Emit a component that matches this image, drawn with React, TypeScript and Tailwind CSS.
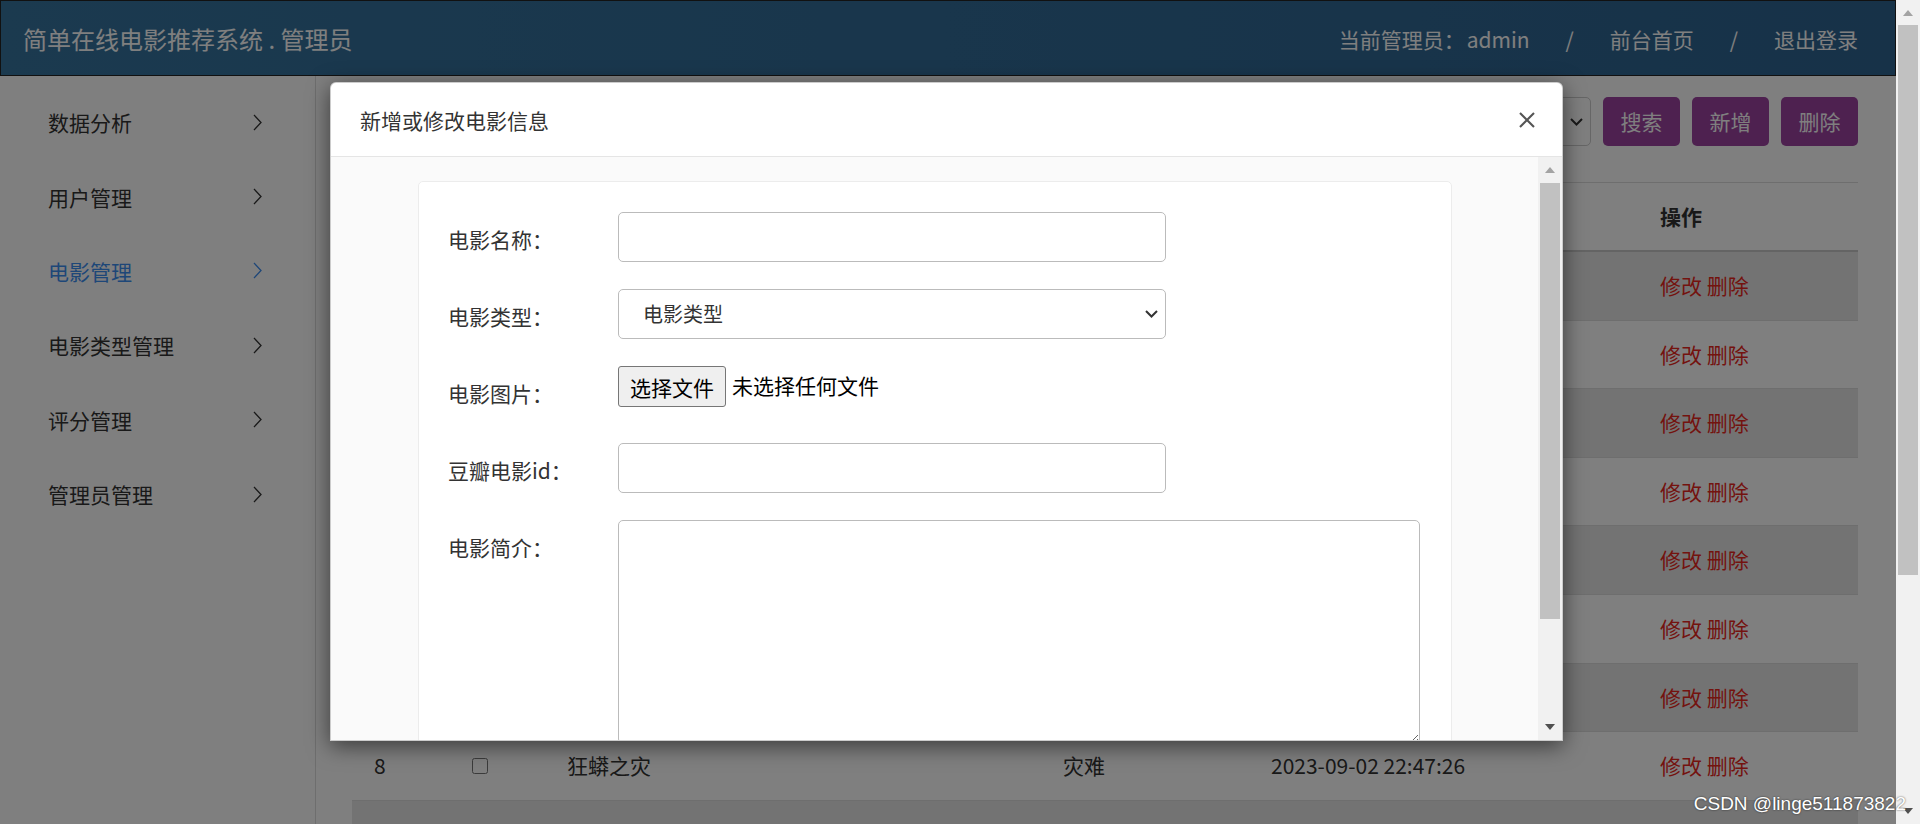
import React from 'react'

const MENU = ['数据分析', '用户管理', '电影管理', '电影类型管理', '评分管理', '管理员管理']

const ROWS = [
  { id: 1, name: '肖申克的救赎', type: '剧情', time: '2023-09-02 22:40:11' },
  { id: 2, name: '霸王别姬', type: '剧情', time: '2023-09-02 22:41:05' },
  { id: 3, name: '阿甘正传', type: '剧情', time: '2023-09-02 22:42:18' },
  { id: 4, name: '泰坦尼克号', type: '爱情', time: '2023-09-02 22:43:02' },
  { id: 5, name: '千与千寻', type: '动画', time: '2023-09-02 22:44:37' },
  { id: 6, name: '盗梦空间', type: '科幻', time: '2023-09-02 22:45:50' },
  { id: 7, name: '星际穿越', type: '科幻', time: '2023-09-02 22:46:41' },
  { id: 8, name: '狂蟒之灾', type: '灾难', time: '2023-09-02 22:47:26' },
]

function Chevron() {
  return (
    <svg width="9" height="17" viewBox="0 0 9 17" fill="none">
      <polyline points="1,1 8,8.5 1,16" stroke="currentColor" strokeWidth="1.3" />
    </svg>
  )
}

function SelectArrow() {
  return (
    <svg width="13" height="8" viewBox="0 0 13 8" fill="none">
      <polyline points="1,1 6.5,6.5 12,1" stroke="#333" strokeWidth="2" />
    </svg>
  )
}

function Arrow({ up, color }: { up?: boolean; color: string }) {
  return (
    <svg width="10" height="6" viewBox="0 0 10 6">
      <polygon points={up ? '0,6 5,0 10,6' : '0,0 5,6 10,0'} fill={color} />
    </svg>
  )
}

function FormRow({ label, children }: { label: string; children: React.ReactNode }) {
  return (
    <div className="flex items-start">
      <label className="w-[170px] shrink-0 pt-[13px] text-[21px] leading-[28px] text-[#333]">{label}</label>
      {children}
    </div>
  )
}

export default function App() {
  return (
    <div className="relative flex h-[824px] w-[1920px] overflow-hidden bg-white font-['Noto_Sans_CJK_SC',sans-serif]">
      {/* page */}
      <div className="relative flex min-w-0 flex-1 flex-col">
        <header className="flex h-[76px] shrink-0 items-center justify-between border border-[#222] bg-gradient-to-r from-[#36749f] to-[#2e6491] pl-[22px] pr-[37px] pt-[2px] text-white">
          <div className="text-[24px] leading-[32px]">简单在线电影推荐系统 . 管理员</div>
          <nav className="flex items-center gap-[36px] text-[21px] leading-[28px]">
            <span>
              当前管理员：<span className="ml-[2px]">admin</span>
            </span>
            <span>/</span>
            <span>前台首页</span>
            <span>/</span>
            <span>退出登录</span>
          </nav>
        </header>

        <div className="flex min-h-0 flex-1">
          {/* sidebar */}
          <aside className="w-[316px] shrink-0 border-r border-[#dcdcdc] bg-white pt-[9px]">
            {MENU.map(item => {
              const active = item === '电影管理'
              return (
                <div
                  key={item}
                  className={`flex h-[74.4px] items-center justify-between pl-[48px] pr-[53px] text-[21px] leading-[28px] ${active ? 'text-[#3d8ef0]' : 'text-[#333]'}`}
                >
                  <span>{item}</span>
                  <Chevron />
                </div>
              )
            })}
          </aside>

          {/* content */}
          <main className="min-w-0 flex-1 bg-white pl-[36px] pr-[38px] pt-[21px]">
            <div className="flex h-[49px] items-stretch justify-end gap-[12px]">
              <input
                className="w-[240px] rounded-[5px] border border-[#ccc] bg-white px-[12px] text-[20px]"
                placeholder="请输入电影名称"
              />
              <div className="relative w-[200px]">
                <select className="h-full w-full appearance-none rounded-[5px] border border-[#ccc] bg-white px-[14px] text-[20px] text-[#333]">
                  <option>全部类型</option>
                </select>
                <span className="pointer-events-none absolute right-[8px] top-[21px]">
                  <SelectArrow />
                </span>
              </div>
              {['搜索', '新增', '删除'].map(b => (
                <button key={b} className="w-[77px] rounded-[5px] bg-[#9c42a0] text-[21px] text-white">
                  {b}
                </button>
              ))}
            </div>

            <div className="mt-[36px] text-[21px] text-[#333]">
              <div className="grid h-[70px] grid-cols-[98px_95px_496px_208px_389px_220px] items-center border-t border-b-2 border-t-[#dcdcdc] border-b-[#c8c8c8] font-bold">
                <div className="px-[22px]">序号</div>
                <div className="flex px-[22px]">
                  <input type="checkbox" className="h-[16px] w-[16px]" />
                </div>
                <div className="px-[22px]">电影名称</div>
                <div className="px-[22px]">电影类型</div>
                <div className="px-[22px]">添加时间</div>
                <div className="px-[22px]">操作</div>
              </div>
              {ROWS.map((r, i) => (
                <div
                  key={r.id}
                  className={`grid h-[68.6px] grid-cols-[98px_95px_496px_208px_389px_220px] items-center border-b border-[#dcdcdc] ${i % 2 === 0 ? 'bg-[#e6e6e6]' : ''}`}
                >
                  <div className="px-[22px]">{r.id}</div>
                  <div className="flex px-[22px]">
                    <input type="checkbox" className="h-[16px] w-[16px]" />
                  </div>
                  <div className="px-[22px]">{r.name}</div>
                  <div className="px-[22px]">{r.type}</div>
                  <div className="px-[22px]">{r.time}</div>
                  <div className="px-[22px] text-[#e8261c]">修改 删除</div>
                </div>
              ))}
              <div className="h-[68px] bg-[#e6e6e6]" />
            </div>
          </main>
        </div>

        {/* backdrop */}
        <div className="absolute inset-0 bg-black/50" />

        {/* modal */}
        <div className="absolute left-[330px] top-[82px] flex h-[659px] w-[1233px] flex-col overflow-hidden rounded-t-[6px] border border-black/20 bg-white shadow-[0_5px_22px_rgba(0,0,0,0.55)]">
          <div className="flex h-[74px] shrink-0 items-center justify-between border-b border-[#e5e5e5] pl-[29px] pr-[26px]">
            <h4 className="text-[21px] leading-[28px] text-[#333]">新增或修改电影信息</h4>
            <svg width="18" height="18" viewBox="0 0 18 18">
              <path d="M2 2 L16 16 M16 2 L2 16" stroke="#555" strokeWidth="2.1" />
            </svg>
          </div>

          <div className="flex min-h-0 flex-1">
            <div className="min-w-0 flex-1 overflow-hidden bg-[#fafafa] pl-[87px] pt-[24px]">
              <div className="w-[1034px] rounded-[5px] border border-[#ececec] bg-white pl-[29px] pt-[30px] pb-[40px]">
                <div className="flex flex-col gap-[27px]">
                  <FormRow label="电影名称：">
                    <input className="h-[50px] w-[548px] rounded-[5px] border border-[#bbb] bg-white" />
                  </FormRow>
                  <FormRow label="电影类型：">
                    <div className="relative">
                      <select className="h-[50px] w-[548px] appearance-none rounded-[5px] border border-[#bbb] bg-white pl-[24px] text-[20px] text-[#333]">
                        <option>电影类型</option>
                      </select>
                      <span className="pointer-events-none absolute right-[8px] top-[21px]">
                        <SelectArrow />
                      </span>
                    </div>
                  </FormRow>
                  <FormRow label="电影图片：">
                    <div className="flex h-[50px] items-start gap-[6px]">
                      <button className="h-[41px] w-[108px] rounded-[3px] border border-[#767676] bg-[#efefef] text-[21px] leading-[28px] text-black">
                        选择文件
                      </button>
                      <span className="pt-[5px] text-[21px] leading-[28px] text-black">未选择任何文件</span>
                    </div>
                  </FormRow>
                  <FormRow label="豆瓣电影id：">
                    <input className="h-[50px] w-[548px] rounded-[5px] border border-[#bbb] bg-white" />
                  </FormRow>
                  <FormRow label="电影简介：">
                    <textarea className="h-[224px] w-[802px] rounded-[5px] border border-[#bbb] bg-white" />
                  </FormRow>
                </div>
              </div>
            </div>

            {/* modal scrollbar */}
            <div className="flex w-[24px] shrink-0 flex-col bg-[#f1f1f1]">
              <div className="flex h-[26px] items-center justify-center">
                <Arrow up color="#a3a3a3" />
              </div>
              <div className="mx-[2px] h-[436px] bg-[#c1c1c1]" />
              <div className="flex-1" />
              <div className="flex h-[26px] items-center justify-center">
                <Arrow color="#505050" />
              </div>
            </div>
          </div>
        </div>
      </div>

      {/* page scrollbar */}
      <div className="flex w-[24px] shrink-0 flex-col bg-[#f1f1f1]">
        <div className="flex h-[25px] items-center justify-center">
          <Arrow up color="#a3a3a3" />
        </div>
        <div className="mx-[2px] h-[550px] bg-[#c1c1c1]" />
        <div className="flex-1" />
        <div className="flex h-[26px] items-center justify-center">
          <Arrow color="#505050" />
        </div>
      </div>

      {/* watermark */}
      <div className="pointer-events-none absolute bottom-[8px] right-[14px] font-['Liberation_Sans',sans-serif] text-[19px] leading-[24px] text-white [text-shadow:0_0_2px_rgba(0,0,0,0.7)]">
        CSDN @linge511873822
      </div>
    </div>
  )
}
